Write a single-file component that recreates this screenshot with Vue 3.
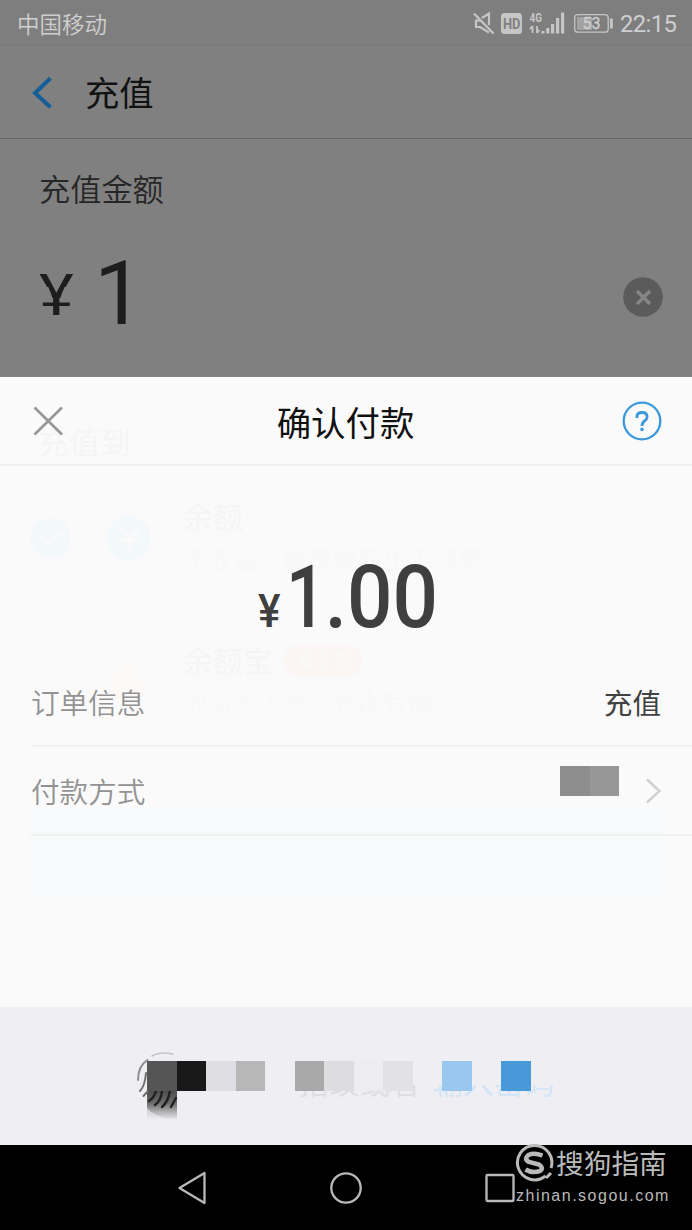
<script setup>
const mosaic = ['#555555', '#191919', '#dedde2', '#b7b7b8', 'transparent', '#a9a9aa', '#dddddf', '#ededf0', '#e2e2e5', 'transparent', '#99c7ee', 'transparent', '#4799d8']
</script>

<template>
  <div class="phone">
    <header class="status">
      <span class="carrier">中国移动</span>
      <svg class="sys" width="144" height="30" viewBox="472 8 144 30">
        <g fill="none" stroke="#c6c6c6" stroke-width="2.2">
          <path d="M474 13.5 L493.5 33.5" />
          <path d="M481 20.5 H476 V27 H480 L489 32.5 M482 18 L489 13.5 V25" />
        </g>
        <rect x="501" y="13" width="21" height="21" rx="3.5" fill="#c6c6c6" />
        <text x="503" y="28.5" font-size="14" font-weight="700" fill="#808080" textLength="17.5" lengthAdjust="spacingAndGlyphs">HD</text>
        <text x="529.5" y="21.8" font-size="12.5" font-weight="700" fill="#c6c6c6" textLength="12.5" lengthAdjust="spacingAndGlyphs">4G</text>
        <path d="M532.5 33 V26 M530 29 L532.5 26 M537 26 V33 M537 33 L539.5 30" fill="none" stroke="#c6c6c6" stroke-width="1.8" />
        <g fill="#c6c6c6">
          <rect x="541.5" y="31" width="3" height="2.5" />
          <rect x="546.2" y="28" width="3.2" height="5.5" />
          <rect x="551" y="24" width="3.2" height="9.5" />
          <rect x="556" y="18" width="3.2" height="15.5" />
          <rect x="561" y="12.5" width="3.2" height="21" />
        </g>
        <rect x="574.7" y="14.7" width="33.5" height="17.5" rx="3" fill="none" stroke="#c6c6c6" stroke-width="1.3" />
        <rect x="577" y="17" width="15" height="13" fill="#a3a3a3" />
        <rect x="610" y="18.5" width="2.8" height="10" fill="#c6c6c6" />
        <text x="582.5" y="29.2" font-size="16" fill="#cfcfcf" stroke="#cfcfcf" stroke-width=".3">53</text>
      </svg>
      <span class="clock">22:15</span>
    </header>

    <div class="titlebar">
      <svg width="24" height="36" viewBox="30 75 24 36"><path d="M50.5 78.3 L35 93 L50.5 107.2" fill="none" stroke="#135f96" stroke-width="4" /></svg>
      <h1>充值</h1>
    </div>

    <section class="amount">
      <p class="label">充值金额</p>
      <div class="entry">
        <span class="yen">¥</span><span class="num">1</span>
        <svg class="clear" width="40" height="40" viewBox="0 0 40 40">
          <circle cx="20" cy="20" r="19.8" fill="#5b5b5b" />
          <path d="M14 14 L27 27 M27 14 L14 27" stroke="#858585" stroke-width="3.4" />
        </svg>
      </div>
    </section>

    <main class="sheet">
      <svg class="beneath" width="692" height="630" viewBox="0 377 692 630">
        <rect x="28" y="808" width="636" height="88" rx="4" fill="#f7f9fb" />
        <g fill="#f5f5f5">
          <text x="38" y="454" font-size="31">充值到</text>
          <text x="183" y="528" font-size="30">余额</text>
          <text x="183" y="672" font-size="30">余额宝</text>
        </g>
        <g fill="#f8f8f8">
          <text x="183" y="569" font-size="25">不收益，提现或转出手续费</text>
          <text x="183" y="711" font-size="25">收益天天有，转出有额</text>
        </g>
        <circle cx="50.5" cy="538" r="20" fill="#f3f8fb" />
        <path d="M41 538 L48 545 L61 532" fill="none" stroke="#fafafa" stroke-width="4" />
        <circle cx="129" cy="538" r="22" fill="#f3f8fb" />
        <path d="M120 528 L129 538 L138 528 M129 536 V550 M120 540 H138" fill="none" stroke="#fafafa" stroke-width="4" />
        <rect x="284" y="645" width="78" height="31" rx="14" fill="#fbf5f4" />
        <text x="297" y="667" font-size="18" fill="#fafaf8">有收益</text>
        <path d="M117 662 H135 L132 672 Q145 678 145 691 Q143 700 127 700 Q109 700 109 691 Q110 678 121 672 Z" fill="#fbf8f5" />
      </svg>

      <div class="sheethead">
        <svg width="34" height="34" viewBox="31 404 34 34"><path d="M34.5 407.5 L62 434.5 M62 407.5 L34.5 434.5" stroke="#979797" stroke-width="2.7" /></svg>
        <h2>确认付款</h2>
        <svg width="40" height="40" viewBox="622 401 40 40">
          <circle cx="642" cy="421" r="18.3" fill="none" stroke="#3c99db" stroke-width="2.3" />
          <path d="M636.9 418 V417 Q636.9 412.5 642 412.5 Q647.1 412.5 647.1 417 Q647.1 419.2 644.5 421 Q642 422.8 642 426" fill="none" stroke="#3c99db" stroke-width="2.8" />
          <circle cx="642" cy="429.4" r="1.8" fill="#3c99db" />
        </svg>
      </div>

      <div class="total"><span class="cur">¥</span><span class="sum"><span class="unit">1</span>.00</span></div>

      <div class="row">
        <span class="key">订单信息</span>
        <span class="val">充值</span>
      </div>
      <div class="row">
        <span class="key">付款方式</span>
        <span class="method">
          <span class="masked"><i></i><i></i></span>
          <svg width="18" height="28" viewBox="645 777 18 28"><path d="M647 779.5 L659.5 791 L647 802.5" fill="none" stroke="#d0d0d0" stroke-width="2.4" /></svg>
        </span>
      </div>
    </main>

    <footer class="verify">
      <svg class="print" width="60" height="76" viewBox="130 1047 60 76">
        <defs>
          <linearGradient id="fade" x1="0" y1="0" x2="0" y2="1">
            <stop offset="0" stop-color="#4a4a4a" /><stop offset=".45" stop-color="#6c6c6c" /><stop offset="1" stop-color="#e6e6e9" />
          </linearGradient>
        </defs>
        <rect x="147" y="1090" width="30" height="29" fill="url(#fade)" />
        <path d="M147 1108 Q154 1116 170 1119.5 H147 Z" fill="#efeef3" opacity=".6" />
        <g fill="none" stroke-linecap="round">
          <path d="M152 1056 Q160 1051.5 173 1054" stroke="#c4c4c6" stroke-width="1.5" />
          <path d="M138 1080 Q138 1066 147.5 1060" stroke="#8d8d8f" stroke-width="2" />
          <path d="M140 1091 Q145 1086 146 1073 M143.5 1096 L148 1091" stroke="#707072" stroke-width="2" />
          <path d="M149 1101 Q154 1098 156 1091 M155 1105 Q161 1101 162 1091 M162 1107 Q168 1102 170 1091 M171 1107 L176 1098" stroke="#202020" stroke-width="2.4" />
        </g>
      </svg>
      <p class="hint"><span>请验证指纹或者</span><b>输入密码</b></p>
      <div class="mosaic"><i v-for="(c, n) in mosaic" :key="n" :style="{ background: c }"></i></div>
    </footer>

    <nav class="nav">
      <svg width="692" height="85" viewBox="0 1145 692 85" fill="none" stroke="#b9b9b9" stroke-width="2.3" stroke-linejoin="round">
        <path d="M204.5 1173 V1203 L179.5 1188 Z" />
        <circle cx="346" cy="1188" r="14.7" />
        <rect x="486.5" y="1175" width="27" height="26" rx="1" />
      </svg>
      <div class="brand">
        <div class="brandtop">
          <svg width="40" height="40" viewBox="515 1143 40 40">
            <path d="M545.5 1176 A17.2 17.2 0 1 1 551 1168" fill="none" stroke="#bababa" stroke-width="3" />
            <path d="M542.5 1155.5 Q534 1152.5 528.5 1155 Q523.5 1159 529 1162 L539 1164.5 Q545 1169 538.5 1171.5 Q531 1173 525.5 1169.5" fill="none" stroke="#bababa" stroke-width="4.5" />
            <path d="M546 1178 L551 1173" stroke="#bababa" stroke-width="3" />
          </svg>
          <span>搜狗指南</span>
        </div>
        <span class="site">zhinan.sogou.com</span>
      </div>
    </nav>
  </div>
</template>

<style>
body { margin: 0; background: #808080; }
</style>

<style scoped>
.phone { width: 692px; height: 1230px; overflow: hidden; display: flex; flex-direction: column; background: #808080; font-family: Roboto, "Noto Sans CJK SC", sans-serif; }
.phone * { box-sizing: border-box; }
h1, h2, p { margin: 0; font-weight: 400; }
svg { display: block; flex: none; }
.status { flex: none; height: 46px; display: flex; align-items: center; padding: 0 0 0 17px; border-bottom: 1px solid #7a7a7a; background: #7e7e7e; color: #cfcfcf; }
.carrier { font: 350 22.5px/46px "Noto Sans CJK SC", sans-serif; width: 455px; padding-top: 1px; }
.clock { font-size: 23.8px; line-height: 46px; margin-left: 4px; padding-top: 2px; white-space: nowrap; letter-spacing: -.6px; }
.titlebar { flex: none; height: 93px; display: flex; align-items: center; padding-left: 30px; border-bottom: 1px solid #656565; }
.titlebar h1 { margin: -3px 0 0 31px; font: 34.3px/60px "Noto Sans CJK SC", sans-serif; color: #121212; }
.titlebar svg { margin-top: 1px; }
.amount { flex: none; height: 238px; padding: 29px 29px 0 39px; color: #1d1d1d; }
.label { font: 350 31.2px/40px "Noto Sans CJK SC", sans-serif; color: #262626; }
.entry { display: flex; height: 100px; margin-top: 36px; align-items: center; }
/* the single-bar yen: the upper bar is trimmed on both sides of the stem */
.yen { width: 55px; font-size: 57px; line-height: 100px; height: 100px; padding-top: 2px; transform: scaleX(1.16); transform-origin: left; clip-path: polygon(0 0, 100% 0, 100% 43px, 22px 43px, 18px 55px, 100% 55px, 100% 100%, 0 100%, 0 55px, 12px 55px, 8px 43px, 0 43px); }
.num { font-size: 89px; line-height: 100px; width: 60px; }
.clear { margin: 5px 0 0 auto; }
.sheet { position: relative; flex: none; height: 630px; background: #fafafa; border-top: 1px solid #fff; }
.beneath { position: absolute; left: 0; top: -1px; font-family: "Noto Sans CJK SC", sans-serif; }
.sheethead { position: relative; height: 88px; display: flex; align-items: center; justify-content: space-between; padding: 0 30px 0 31px; border-bottom: 2px solid #f0f0f0; }
.sheethead h2 { font: 34.4px/60px "Noto Sans CJK SC", sans-serif; color: #111; padding-left: 4px; }
.total { position: relative; height: 192px; padding: 78px 0 0 258px; display: flex; align-items: flex-start; color: #3f3f3f; }
.cur { width: 28px; font-size: 46px; font-weight: 500; line-height: 100px; padding-top: 17px; transform: scaleX(.92); transform-origin: left; }
.sum { font-size: 88px; font-weight: 500; line-height: 106px; transform: scaleX(.91); transform-origin: left; white-space: nowrap; }
.unit { display: inline-block; margin-right: -7.5px; transform: scaleX(.88); transform-origin: left; }
.row { position: relative; height: 89px; margin-left: 31px; padding-right: 31px; border-bottom: 2px solid #f0f1f1; display: flex; justify-content: space-between; align-items: center; }
.key, .val { font: 28.6px/40px "Noto Sans CJK SC", sans-serif; color: #979797; }
.key { font-weight: 350; color: #929292; }
.val { color: #414141; }
.method { display: flex; align-items: center; gap: 26px; margin-right: -2px; }
.masked { display: flex; margin-top: -20px; }
.masked i { width: 30px; height: 30px; background: #8e8e8e; }
.masked i + i { width: 29px; background: #979797; }
.verify { position: relative; flex: none; height: 138px; background: #efeef3; }
.print { position: absolute; left: 130px; top: 40px; }
.hint { position: absolute; left: 207px; top: 54px; font: 30.5px/40px "Noto Sans CJK SC", sans-serif; color: #dfdfe3; white-space: nowrap; clip-path: inset(24px 0 0 90px); }
.hint b { font-weight: 400; color: #d3e5f6; margin-left: 12px; }
.mosaic { position: absolute; left: 147px; top: 54px; display: flex; }
.mosaic i { width: 29.5px; height: 29.5px; }
.nav { position: relative; flex: none; height: 85px; background: #000; }
.brand { position: absolute; left: 515px; top: -2px; color: #bababa; }
.brandtop { display: flex; height: 40px; align-items: center; }
.brandtop span { font: 27.7px/40px "Noto Sans CJK SC", sans-serif; margin: -2px 0 0 1px; white-space: nowrap; }
.site { display: block; font: 16px/22px "Liberation Sans", sans-serif; letter-spacing: 1.5px; white-space: nowrap; padding: 2px 0 0 1px; }
</style>
